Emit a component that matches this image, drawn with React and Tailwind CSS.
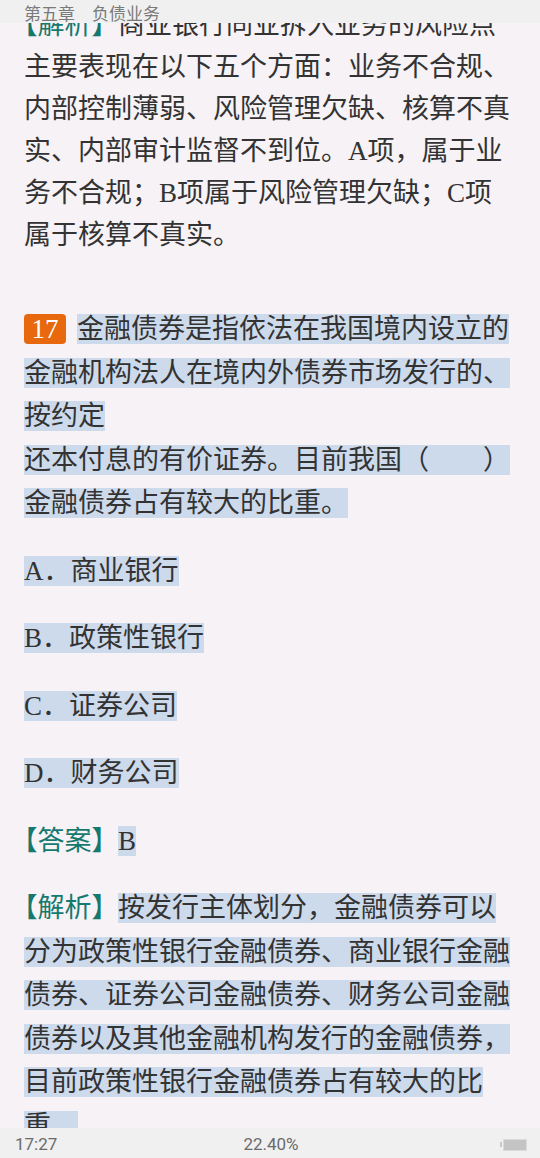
import React from "react";

const HL = "bg-[#cddaeb]";

function Label({ children }) {
  return (
    <span className="mr-[13px] text-[#16796e] [font-feature-settings:'halt']">
      {children}
    </span>
  );
}

export default function App() {
  return (
    <div className="relative h-[1158px] w-[540px] overflow-hidden bg-[#f6f2f6]">
      <div
        className="px-[24px] pt-[4px] text-[27px] text-[#333333]"
        style={{ fontFamily: '"Liberation Serif", "Noto Sans CJK SC", serif' }}
      >
        <p className="leading-[42px]">
          <Label>【解析】</Label>
          商业银行同业拆入业务的风险点主要表现在以下五个方面：业务不合规、内部控制薄弱、风险管理欠缺、核算不真实、内部审计监督不到位。A项，属于业务不合规；B项属于风险管理欠缺；C项属于核算不真实。
        </p>

        <p className="mt-[52px] leading-[43.5px]">
          <span className="mr-[11px] inline-block h-[30px] w-[42px] rounded-[4px] bg-[#e8680e] text-center leading-[30px] text-white">
            17
          </span>
          <span className={HL}>
            金融债券是指依法在我国境内设立的金融机构法人在境内外债券市场发行的、按约定
            <br />
            还本付息的有价证券。目前我国（　　）金融债券占有较大的比重。
          </span>
        </p>

        <p className="mt-[24px] leading-[43.5px]">
          <span className={HL}>A．商业银行</span>
        </p>
        <p className="mt-[24px] leading-[43.5px]">
          <span className={HL}>B．政策性银行</span>
        </p>
        <p className="mt-[24px] leading-[43.5px]">
          <span className={HL}>C．证券公司</span>
        </p>
        <p className="mt-[24px] leading-[43.5px]">
          <span className={HL}>D．财务公司</span>
        </p>

        <p className="mt-[24px] leading-[43.5px]">
          <Label>【答案】</Label>
          <span className={HL}>B</span>
        </p>

        <p className="mt-[24px] leading-[43.5px]">
          <Label>【解析】</Label>
          <span className={HL}>
            按发行主体划分，金融债券可以分为政策性银行金融债券、商业银行金融债券、证券公司金融债券、财务公司金融债券以及其他金融机构发行的金融债券，目前政策性银行金融债券占有较大的比重。
          </span>
        </p>
      </div>

      {/* top chapter bar */}
      <div className="absolute left-0 top-0 h-[23px] w-full bg-[#f0f0f0]">
        <div
          className="pl-[24px] text-[17px] leading-[26px] text-[#7a7a7a]"
          style={{ fontFamily: '"Noto Sans CJK SC", sans-serif' }}
        >
          第五章　负债业务
        </div>
      </div>

      {/* bottom status bar */}
      <div
        className="absolute bottom-0 left-0 grid h-[30px] w-full grid-cols-3 items-center bg-[#f0f0f0] pl-[15px] pr-[13px] pt-[3px] text-[17px] text-[#6b6b6b]"
        style={{ fontFamily: "Roboto, sans-serif" }}
      >
        <span>17:27</span>
        <span className="text-center">22.40%</span>
        <div className="flex items-center justify-end">
          <div className="h-[5px] w-[2px] bg-[#c8c8c8]" />
          <div className="ml-[1px] h-[12px] w-[24px] border border-[#dadada] bg-[#c4c4c4]" />
        </div>
      </div>
    </div>
  );
}
